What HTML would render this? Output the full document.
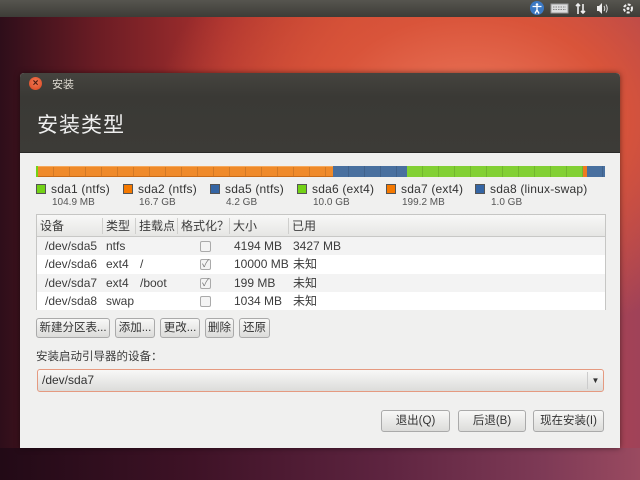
<!DOCTYPE html>
<html><head><meta charset="utf-8"><style>
*{box-sizing:border-box;margin:0;padding:0}
body{width:640px;height:480px;overflow:hidden;position:relative;font-family:"Liberation Sans","Noto Sans CJK SC",sans-serif;font-size:12px;color:#3c3c3c;
background:radial-gradient(ellipse 420px 300px at 470px 120px,#ee7a5e 0%,#d9543a 35%,rgba(180,50,50,0) 75%),linear-gradient(90deg,#2e0e1a 0%,#6a1c24 15%,#a8302e 35%,#c8462f 55%,#b8484a 80%,#a04258 100%);}
.bot{position:absolute;left:0;top:448px;width:640px;height:32px;background:linear-gradient(90deg,#220a16,#3e1226 30%,#5e2440 60%,#7e3a56 85%,#9a4a60)}
.panel{position:absolute;left:0;top:0;width:640px;height:17px;background:linear-gradient(#56554f,#3d3c37);}
.dlg{position:absolute;left:20px;top:73px;width:600px;height:375px;background:#f0f0ef;border-radius:4px 4px 0 0;box-shadow:0 0 6px rgba(0,0,0,.5)}
.head{position:absolute;left:0;top:0;width:600px;height:80px;background:linear-gradient(#45443f,#3a3935 30%,#3c3b37);border-radius:4px 4px 0 0;border-bottom:1px solid #2a2a28}
.close{position:absolute;left:9px;top:4px;width:13px;height:13px;border-radius:50%;background:radial-gradient(circle at 50% 40%,#f27a55,#d8441e);color:#4a1a10;font-size:10px;line-height:13px;text-align:center;font-weight:bold}
.t1{position:absolute;left:32px;top:3px;color:#dfdbd2;font-size:11px}
.t2{position:absolute;left:17px;top:36px;color:#eee;font-size:21px;letter-spacing:1px}
.bar{position:absolute;top:93px;height:11px;background-image:repeating-linear-gradient(90deg,transparent 0 15px,rgba(0,0,0,.12) 15px 16px)}
.leg{position:absolute;top:109px;font-size:12px;color:#333;letter-spacing:.2px}
.leg b{display:inline-block;width:10px;height:10px;border:1px solid #555;vertical-align:-1px;margin-right:5px}
.leg i{display:block;font-style:normal;font-size:10px;color:#555;margin-left:16px;margin-top:1px;letter-spacing:0}
.tbl{position:absolute;left:16px;top:141px;width:570px;height:96px;background:#fff;border:1px solid #c6c6c4}
.th{height:22px;background:linear-gradient(#f8f8f7,#e6e6e4);border-bottom:1px solid #c8c8c6;position:relative}
.th span{position:absolute;top:3px;height:16px;border-right:1px solid #cfcfcd;padding-left:3px;line-height:16px}
.row{height:18.25px;position:relative;line-height:18px}
.row span{position:absolute;top:0}
.cb{position:absolute;left:163px;top:4px;width:11px;height:11px;border:1px solid #aaa;border-radius:2px;background:#f4f4f4;font-size:10px;line-height:9px;color:#777;text-align:center}
.btn{position:absolute;height:20px;border:1px solid #aaa;border-radius:3px;background:linear-gradient(#f8f8f7,#dcdcda);text-align:center;line-height:18px;font-size:11.5px;color:#333}
</style></head><body>
<div class="bot"></div>
<div class="panel">
<svg width="640" height="17" style="position:absolute;left:0;top:0">
<circle cx="537" cy="8" r="7" fill="#3b78c2"/><circle cx="537" cy="4.5" r="1.3" fill="#fff"/><path d="M532.5 6.5h9M537 6.5v3.5l-2 3.5M537 10l2 3.5" stroke="#fff" stroke-width="1.3" fill="none"/>
<rect x="551" y="4" width="17" height="9" fill="#ddd" stroke="#999"/><path d="M553 7h13M553 9.5h13" stroke="#888" stroke-dasharray="1.5 1"/>
<path d="M578 14V4M576 6l2-2 2 2M583 4v9M581 11l2 2 2-2" stroke="#eee" stroke-width="1.6" fill="none"/>
<path d="M597 6h2l3-3v11l-3-3h-2z" fill="#eee"/><path d="M604 6q1.5 2.5 0 5M606 4.5q2.5 4 0 8" stroke="#ddd" fill="none"/>
<circle cx="628" cy="8.5" r="4" stroke="#eee" stroke-width="2" fill="none" stroke-dasharray="3 1.6"/><circle cx="628" cy="8.5" r="1.5" fill="#eee"/>
</svg></div>
<div class="dlg">
<div class="head"><div class="close">×</div><div class="t1">安装</div><div class="t2">安装类型</div></div>
<div class="bar" style="left:16px;width:2px;background-color:#73d216"></div>
<div class="bar" style="left:18px;width:295px;background-color:#ef8a2a;border-top:1px solid #f6a85a;border-bottom:1px solid #c86a16"></div>
<div class="bar" style="left:313px;width:74px;background-color:#49709f"></div>
<div class="bar" style="left:387px;width:176px;background-color:#82d034"></div>
<div class="bar" style="left:563px;width:4px;background-color:#ef7a20"></div>
<div class="bar" style="left:567px;width:18px;background-color:#49709f"></div>
<div class="leg" style="left:16px"><b style="background:#73d216"></b>sda1 (ntfs)<i>104.9 MB</i></div>
<div class="leg" style="left:103px"><b style="background:#f57900"></b>sda2 (ntfs)<i>16.7 GB</i></div>
<div class="leg" style="left:190px"><b style="background:#3465a4"></b>sda5 (ntfs)<i>4.2 GB</i></div>
<div class="leg" style="left:277px"><b style="background:#73d216"></b>sda6 (ext4)<i>10.0 GB</i></div>
<div class="leg" style="left:366px"><b style="background:#f57900"></b>sda7 (ext4)<i>199.2 MB</i></div>
<div class="leg" style="left:455px"><b style="background:#3465a4"></b>sda8 (linux-swap)<i>1.0 GB</i></div>
<div class="tbl">
<div class="th"><span style="left:0;width:66px">设备</span><span style="left:66px;width:33px">类型</span><span style="left:99px;width:42px">挂载点</span><span style="left:141px;width:52px">格式化？</span><span style="left:193px;width:59px">大小</span><span style="left:252px;width:317px;border:none">已用</span></div>
<div style="position:absolute;right:0;top:41px;width:2px;height:53px;background:#e8683a"></div>
<div class="row" style="background:#f3f3f3"><span style="left:8px">/dev/sda5</span><span style="left:69px">ntfs</span><div class="cb"></div><span style="left:197px">4194 MB</span><span style="left:256px">3427 MB</span></div>
<div class="row" style="background:#fff"><span style="left:8px">/dev/sda6</span><span style="left:69px">ext4</span><span style="left:103px">/</span><div class="cb">✓</div><span style="left:197px">10000 MB</span><span style="left:256px">未知</span></div>
<div class="row" style="background:#f3f3f3"><span style="left:8px">/dev/sda7</span><span style="left:69px">ext4</span><span style="left:103px">/boot</span><div class="cb">✓</div><span style="left:197px">199 MB</span><span style="left:256px">未知</span></div>
<div class="row" style="background:#fff"><span style="left:8px">/dev/sda8</span><span style="left:69px">swap</span><div class="cb"></div><span style="left:197px">1034 MB</span><span style="left:256px">未知</span></div>
</div>
<div class="btn" style="left:16px;top:245px;width:74px">新建分区表...</div>
<div class="btn" style="left:95px;top:245px;width:40px">添加...</div>
<div class="btn" style="left:140px;top:245px;width:40px">更改...</div>
<div class="btn" style="left:185px;top:245px;width:29px">删除</div>
<div class="btn" style="left:219px;top:245px;width:31px">还原</div>
<div style="position:absolute;left:16px;top:275px;font-size:11.5px">安装启动引导器的设备：</div>
<div class="btn" style="left:17px;top:296px;width:567px;height:23px;border-color:#e59a80;text-align:left;padding-left:4px;line-height:21px;font-size:12px">/dev/sda7<span style="position:absolute;right:0;top:2px;width:16px;height:17px;border-left:1px solid #ccc;text-align:center;font-size:8px;line-height:17px">▼</span></div>
<div class="btn" style="left:361px;top:337px;width:69px;height:22px;line-height:20px">退出(Q)</div>
<div class="btn" style="left:438px;top:337px;width:68px;height:22px;line-height:20px">后退(B)</div>
<div class="btn" style="left:513px;top:337px;width:71px;height:22px;line-height:20px">现在安装(I)</div>
</div>
</body></html>
